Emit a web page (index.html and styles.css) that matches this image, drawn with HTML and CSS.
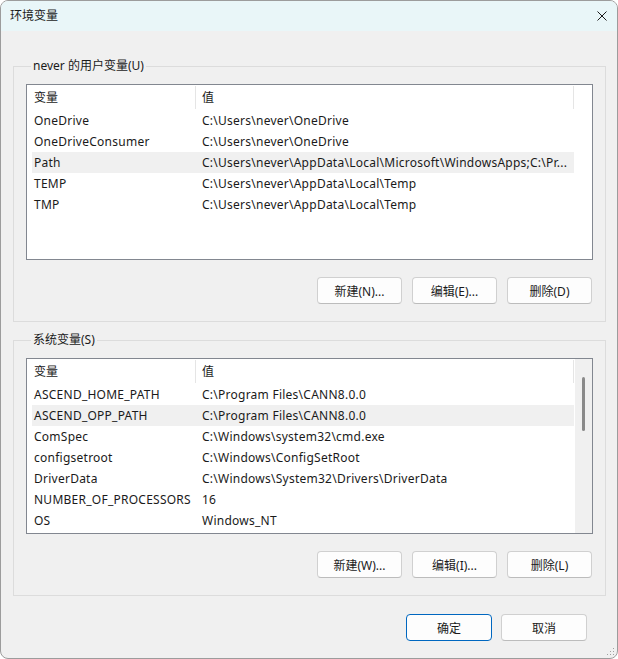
FILE: index.html
```html
<!DOCTYPE html>
<html lang="zh-CN">
<head>
  <meta charset="UTF-8">
  <meta name="viewport" content="width=device-width, initial-scale=1.0">
  <title>环境变量</title>
  <link rel="stylesheet" href="styles.css">
</head>
<body>
  <div class="window">
    <div class="titlebar">
      <span class="title">环境变量</span>
      <span class="close">
        <svg width="10" height="10" viewBox="0 0 10 10"><path d="M0.5 0.5 L9.5 9.5 M9.5 0.5 L0.5 9.5" stroke="#1a1a1a" stroke-width="1" fill="none"/></svg>
      </span>
    </div>

    <div class="content">
      <!-- User variables -->
      <fieldset class="group">
        <legend>never 的用户变量(U)</legend>
        <div class="listview">
          <div class="rows">
            <div class="row head"><div class="cell">变量</div><div class="cell">值</div></div>
            <div class="row"><div class="cell">OneDrive</div><div class="cell">C:\Users\never\OneDrive</div></div>
            <div class="row"><div class="cell">OneDriveConsumer</div><div class="cell">C:\Users\never\OneDrive</div></div>
            <div class="row selected"><div class="cell">Path</div><div class="cell">C:\Users\never\AppData\Local\Microsoft\WindowsApps;C:\Pr...</div></div>
            <div class="row"><div class="cell">TEMP</div><div class="cell">C:\Users\never\AppData\Local\Temp</div></div>
            <div class="row"><div class="cell">TMP</div><div class="cell">C:\Users\never\AppData\Local\Temp</div></div>
          </div>
        </div>
        <div class="actions">
          <button class="btn">新建(N)...</button>
          <button class="btn">编辑(E)...</button>
          <button class="btn">删除(D)</button>
        </div>
      </fieldset>

      <!-- System variables -->
      <fieldset class="group">
        <legend>系统变量(S)</legend>
        <div class="listview">
          <div class="rows">
            <div class="row head"><div class="cell">变量</div><div class="cell">值</div></div>
            <div class="row"><div class="cell">ASCEND_HOME_PATH</div><div class="cell">C:\Program Files\CANN8.0.0</div></div>
            <div class="row selected"><div class="cell">ASCEND_OPP_PATH</div><div class="cell">C:\Program Files\CANN8.0.0</div></div>
            <div class="row"><div class="cell">ComSpec</div><div class="cell">C:\Windows\system32\cmd.exe</div></div>
            <div class="row"><div class="cell">configsetroot</div><div class="cell">C:\Windows\ConfigSetRoot</div></div>
            <div class="row"><div class="cell">DriverData</div><div class="cell">C:\Windows\System32\Drivers\DriverData</div></div>
            <div class="row"><div class="cell">NUMBER_OF_PROCESSORS</div><div class="cell">16</div></div>
            <div class="row"><div class="cell">OS</div><div class="cell">Windows_NT</div></div>
          </div>
          <div class="scrollbar"><div class="thumb"></div></div>
        </div>
        <div class="actions">
          <button class="btn">新建(W)...</button>
          <button class="btn">编辑(I)...</button>
          <button class="btn">删除(L)</button>
        </div>
      </fieldset>

      <div class="footer">
        <button class="btn primary">确定</button>
        <button class="btn">取消</button>
      </div>
    </div>

    <svg class="grip" width="8" height="8" viewBox="0 0 8 8">
      <rect x="6" y="0" width="1" height="1" fill="#a0a0a0"/>
      <rect x="3" y="3" width="1" height="1" fill="#a0a0a0"/>
      <rect x="6" y="3" width="1" height="1" fill="#a0a0a0"/>
      <rect x="0" y="6" width="1" height="1" fill="#a0a0a0"/>
      <rect x="3" y="6" width="1" height="1" fill="#a0a0a0"/>
      <rect x="6" y="6" width="1" height="1" fill="#a0a0a0"/>
    </svg>
  </div>
</body>
</html>
```

FILE: styles.css
```css
/* Windows 11 style "Environment Variables" dialog */
html, body {
  margin: 0;
  padding: 0;
}
body {
  font-family: "Noto Sans", "Noto Sans CJK SC", sans-serif;
  font-size: 12px;
  color: #1a1a1a;
}
.window {
  position: relative;
  width: 618px;
  height: 659px;
  box-sizing: border-box;
  border: 1px solid #9c9c9c;
  border-radius: 8px;
  background-color: #f0f0f0;
  overflow: hidden;
}
.titlebar {
  height: 30px;
  background-color: #e9f6f8;
  display: flex;
  align-items: center;
  justify-content: space-between;
  padding: 0 9px 0 9px;
}
.title {
  line-height: 16px;
}
.close {
  display: flex;
  margin-right: 1px;
}
.content {
  padding: 27px 0 0 0;
}
.group {
  margin: 0 11px 0 12px;
  padding: 10px 12px 17px 12px;
  border: 1px solid #dcdcdc;
  border-radius: 0;
  min-width: 0;
}
.group + .group {
  margin-top: 10px;
}
.group legend {
  padding: 0 2px;
  margin-left: 5px;
  line-height: 16px;
}
.listview {
  height: 176px;
  box-sizing: border-box;
  border: 1px solid #828790;
  background-color: #fff;
  display: flex;
  padding-left: 5px;
}
.rows {
  width: 542px;
  margin-right: 1px;
}
.row {
  display: grid;
  grid-template-columns: 164px 1fr;
  height: 21px;
  line-height: 21px;
  white-space: nowrap;
  letter-spacing: 0.25px;
}
.row .cell {
  overflow: hidden;
}
.row .cell:first-child {
  padding-left: 2px;
}
.row .cell:last-child {
  padding-left: 6px;
}
.row.head {
  height: 25px;
  line-height: 25px;
  letter-spacing: 0;
}
.row.head .cell {
  border-right: 1px solid #e5e5e5;
  margin: 1px 0;
  line-height: 23px;
}
.row.selected {
  background-color: #f0f0f0;
}
.scrollbar {
  width: 17px;
  background-color: #f0f0f0;
  display: flex;
  justify-content: center;
}
.thumb {
  width: 3px;
  height: 54px;
  margin-top: 18px;
  border-radius: 2px;
  background-color: #8a8a8a;
}
.actions {
  display: flex;
  justify-content: flex-end;
  gap: 10px;
  margin-top: 17px;
  margin-right: 1px;
}
.btn {
  width: 85px;
  height: 27px;
  box-sizing: border-box;
  font-family: inherit;
  font-size: 12px;
  color: #1a1a1a;
  background-color: #fdfdfd;
  border: 1px solid #d0d0d0;
  border-bottom-color: #bcbcbc;
  border-radius: 4px;
  padding: 0;
}
.btn.primary {
  border: 1px solid #0067c0;
}
.footer {
  display: flex;
  justify-content: flex-end;
  gap: 9px;
  margin-top: 18px;
  padding-right: 30px;
}
.footer .btn {
  width: 86px;
}
.grip {
  position: absolute;
  right: 2px;
  bottom: 2px;
}
```
